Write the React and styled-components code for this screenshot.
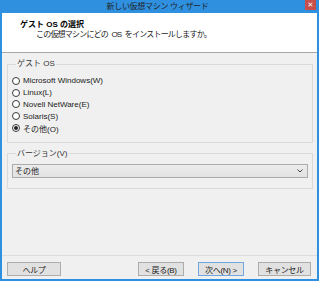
import React from "react";
import styled, { createGlobalStyle } from "styled-components";

const GlobalStyle = createGlobalStyle`
  html, body { margin: 0; padding: 0; background: #ffffff; }
  body { font-family: "Liberation Sans", "Noto Sans CJK JP", sans-serif; font-size: 8px; color: #1a1a1a; }
  * { box-sizing: border-box; }
`;

const BLUE = "#2f90e0";

const Window = styled.div`
  width: 319px;
  height: 281px;
  display: flex;
  flex-direction: column;
`;

const TitleBar = styled.div`
  height: 13px;
  background: ${BLUE};
  display: grid;
  grid-template-columns: 1fr auto 1fr;
  align-items: start;
`;

const TitleText = styled.div`
  grid-column: 2;
  font-size: 8px;
  line-height: 13px;
  color: #1f1f1f;
  letter-spacing: -0.3px;
  margin-left: -4px;
`;

const CloseButton = styled.div`
  grid-column: 3;
  justify-self: end;
  width: 11px;
  height: 10px;
  margin-right: 3px;
  background: #c9504a;
  color: #fff;
  font-size: 7px;
  font-weight: bold;
  line-height: 10px;
  text-align: center;
  font-family: "DejaVu Sans", sans-serif;
`;

const Frame = styled.div`
  flex: 1;
  display: flex;
  flex-direction: column;
  border: 2px solid ${BLUE};
  border-top: none;
  background: #f0f0f0;
`;

const Header = styled.div`
  height: 40px;
  background: #ffffff;
  border-bottom: 1px solid #a8a8a8;
  padding: 7px 0 0 18px;
`;

const HeaderTitle = styled.div`
  font-weight: bold;
  font-size: 8px;
  line-height: 10px;
  color: #000;
`;

const HeaderSub = styled.div`
  padding-left: 16px;
  font-size: 8px;
  line-height: 10px;
  letter-spacing: -0.8px;
  word-spacing: 2px;
  color: #222;
`;

const Body = styled.div`
  flex: 1;
  padding: 6px 4px 0 5px;
  display: flex;
  flex-direction: column;
  gap: 6px;
`;

const Group = styled.fieldset`
  margin: 0;
  padding: ${(p) => p.$pad};
  border: 1px solid #dadada;
  min-width: 0;
`;

const Legend = styled.legend`
  margin-left: 4px;
  padding: 0 1px;
  font-size: 8px;
  line-height: 10px;
  color: #333;
`;

const RadioList = styled.div`
  display: flex;
  flex-direction: column;
`;

const RadioRow = styled.label`
  height: 11.8px;
  display: flex;
  align-items: center;
  gap: 3px;
  font-size: 8px;
  color: #1a1a1a;
`;

const RadioCircle = styled.span`
  width: 8px;
  height: 8px;
  border-radius: 50%;
  border: 1px solid #3a3a3a;
  background: #fff;
  display: flex;
  align-items: center;
  justify-content: center;
  &::after {
    content: "";
    width: 4px;
    height: 4px;
    border-radius: 50%;
    background: ${(p) => (p.$checked ? "#222" : "transparent")};
  }
`;

const Select = styled.div`
  height: 14px;
  border: 1px solid #acacac;
  background: linear-gradient(#ececec, #e2e2e2);
  display: flex;
  align-items: center;
  justify-content: space-between;
  padding: 0 4px 0 2px;
  font-size: 8px;
  color: #1a1a1a;
`;

const Footer = styled.div`
  height: 24px;
  border-top: 1px solid #dcdcdc;
  padding: 6px 4px 0 5px;
  display: flex;
  align-items: flex-start;
`;

const Button = styled.div`
  width: ${(p) => p.$w}px;
  height: 14px;
  margin-left: ${(p) => p.$ml || 0}px;
  border: 1px solid ${(p) => (p.$default ? "#6fa8e0" : "#adadad")};
  background: #e1e1e1;
  display: flex;
  align-items: center;
  justify-content: center;
  font-size: 8px;
  color: #222;
  letter-spacing: -0.3px;
`;

const osList = [
  "Microsoft Windows(W)",
  "Linux(L)",
  "Novell NetWare(E)",
  "Solaris(S)",
  "その他(O)",
];

export default function App() {
  return (
    <>
      <GlobalStyle />
      <Window>
        <TitleBar>
          <TitleText>新しい仮想マシン ウィザード</TitleText>
          <CloseButton>✕</CloseButton>
        </TitleBar>
        <Frame>
          <Header>
            <HeaderTitle>ゲスト OS の選択</HeaderTitle>
            <HeaderSub>この仮想マシンにどの OS をインストールしますか。</HeaderSub>
          </Header>
          <Body>
            <Group $pad="6px 4px 8px 4px">
              <Legend>ゲスト OS</Legend>
              <RadioList>
                {osList.map((os, i) => (
                  <RadioRow key={os}>
                    <RadioCircle $checked={i === 4} />
                    {os}
                  </RadioRow>
                ))}
              </RadioList>
            </Group>
            <Group $pad="5px 4px 10px 4px">
              <Legend>バージョン(V)</Legend>
              <Select>
                <span>その他</span>
                <svg width="6" height="4" viewBox="0 0 6 4">
                  <path d="M0.5 0.5 L3 3 L5.5 0.5" fill="none" stroke="#444" strokeWidth="1" />
                </svg>
              </Select>
            </Group>
          </Body>
          <Footer>
            <Button $w={54}>ヘルプ</Button>
            <Button $w={46} $ml={77}>&lt; 戻る(B)</Button>
            <Button $w={46} $ml={14} $default>次へ(N) &gt;</Button>
            <Button $w={53} $ml={14}>キャンセル</Button>
          </Footer>
        </Frame>
      </Window>
    </>
  );
}
